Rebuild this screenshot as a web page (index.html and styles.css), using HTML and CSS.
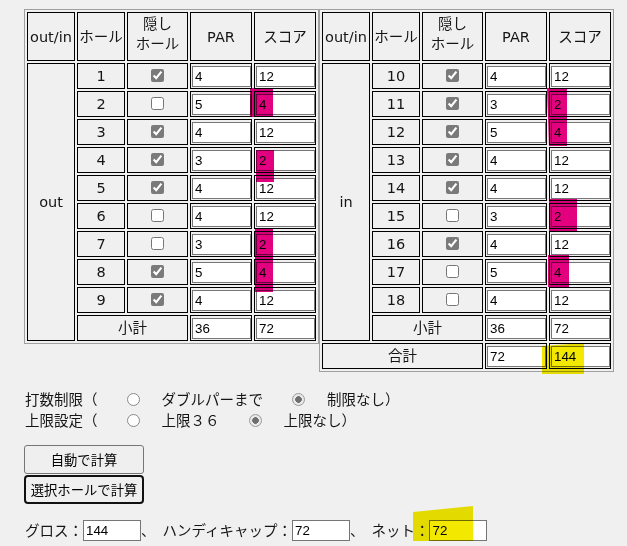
FILE: index.html
```html
<!DOCTYPE html>
<html lang="ja">
<head>
<meta charset="utf-8">
<title>スコア計算</title>
<link rel="stylesheet" href="styles.css">
</head>
<body>
<div class="page">
  <div class="cards">
    <table class="card">
      <thead>
        <tr class="head">
          <th class="w-side">out/in</th>
          <th class="w-hole">ホール</th>
          <th class="w-hide two-line">隠し<br>ホール</th>
          <th class="w-par">PAR</th>
          <th class="w-score">スコア</th>
        </tr>
      </thead>
      <tbody>
        <tr class="row"><td class="side" rowspan="10">out</td><td>1</td><td><input type="checkbox" checked></td><td class="field"><input class="num" value="4"></td><td class="field"><input class="num" value="12"></td></tr>
        <tr class="row"><td>2</td><td><input type="checkbox"></td><td class="field"><input class="num" value="5"></td><td class="field"><input class="num" value="4"></td></tr>
        <tr class="row"><td>3</td><td><input type="checkbox" checked></td><td class="field"><input class="num" value="4"></td><td class="field"><input class="num" value="12"></td></tr>
        <tr class="row"><td>4</td><td><input type="checkbox" checked></td><td class="field"><input class="num" value="3"></td><td class="field"><input class="num" value="2"></td></tr>
        <tr class="row"><td>5</td><td><input type="checkbox" checked></td><td class="field"><input class="num" value="4"></td><td class="field"><input class="num" value="12"></td></tr>
        <tr class="row"><td>6</td><td><input type="checkbox"></td><td class="field"><input class="num" value="4"></td><td class="field"><input class="num" value="12"></td></tr>
        <tr class="row"><td>7</td><td><input type="checkbox"></td><td class="field"><input class="num" value="3"></td><td class="field"><input class="num" value="2"></td></tr>
        <tr class="row"><td>8</td><td><input type="checkbox" checked></td><td class="field"><input class="num" value="5"></td><td class="field"><input class="num" value="4"></td></tr>
        <tr class="row"><td>9</td><td><input type="checkbox" checked></td><td class="field"><input class="num" value="4"></td><td class="field"><input class="num" value="12"></td></tr>
        <tr class="row"><td colspan="2">小計</td><td class="field"><input class="num" value="36"></td><td class="field"><input class="num" value="72"></td></tr>
      </tbody>
    </table>

    <table class="card">
      <thead>
        <tr class="head">
          <th class="w-side">out/in</th>
          <th class="w-hole">ホール</th>
          <th class="w-hide two-line">隠し<br>ホール</th>
          <th class="w-par">PAR</th>
          <th class="w-score">スコア</th>
        </tr>
      </thead>
      <tbody>
        <tr class="row"><td class="side" rowspan="10">in</td><td>10</td><td><input type="checkbox" checked></td><td class="field"><input class="num" value="4"></td><td class="field"><input class="num" value="12"></td></tr>
        <tr class="row"><td>11</td><td><input type="checkbox" checked></td><td class="field"><input class="num" value="3"></td><td class="field"><input class="num" value="2"></td></tr>
        <tr class="row"><td>12</td><td><input type="checkbox" checked></td><td class="field"><input class="num" value="5"></td><td class="field"><input class="num" value="4"></td></tr>
        <tr class="row"><td>13</td><td><input type="checkbox" checked></td><td class="field"><input class="num" value="4"></td><td class="field"><input class="num" value="12"></td></tr>
        <tr class="row"><td>14</td><td><input type="checkbox" checked></td><td class="field"><input class="num" value="4"></td><td class="field"><input class="num" value="12"></td></tr>
        <tr class="row"><td>15</td><td><input type="checkbox"></td><td class="field"><input class="num" value="3"></td><td class="field"><input class="num" value="2"></td></tr>
        <tr class="row"><td>16</td><td><input type="checkbox" checked></td><td class="field"><input class="num" value="4"></td><td class="field"><input class="num" value="12"></td></tr>
        <tr class="row"><td>17</td><td><input type="checkbox"></td><td class="field"><input class="num" value="5"></td><td class="field"><input class="num" value="4"></td></tr>
        <tr class="row"><td>18</td><td><input type="checkbox"></td><td class="field"><input class="num" value="4"></td><td class="field"><input class="num" value="12"></td></tr>
        <tr class="row"><td colspan="2">小計</td><td class="field"><input class="num" value="36"></td><td class="field"><input class="num" value="72"></td></tr>
        <tr class="row"><td colspan="3">合計</td><td class="field"><input class="num" value="72"></td><td class="field"><input class="num" value="144"></td></tr>
      </tbody>
    </table>
  </div>

  <div class="options">
    <div class="opt-line">
      <span class="opt-title">打数制限（</span>
      <input type="radio" class="radio" name="stroke">
      <span class="opt-label">ダブルパーまで</span>
      <input type="radio" class="radio" name="stroke" checked>
      <span class="opt-label">制限なし）</span>
    </div>
    <div class="opt-line">
      <span class="opt-title">上限設定（</span>
      <input type="radio" class="radio" name="cap">
      <span class="opt-label">上限３６</span>
      <input type="radio" class="radio" name="cap" checked>
      <span class="opt-label">上限なし）</span>
    </div>
  </div>

  <div class="btns">
    <button class="btn" type="button">自動で計算</button>
    <button class="btn is-focused" type="button">選択ホールで計算</button>
  </div>

  <div class="totals">
    <span class="t-label">グロス：</span><input class="num" value="144"><span class="t-sep">、</span>
    <span class="t-label">ハンディキャップ：</span><input class="num" value="72"><span class="t-sep">、</span>
    <span class="t-label">ネット：</span><input class="num" value="72">
  </div>

  <div class="marks">
    <span class="mark pink m1"></span>
    <span class="mark pink m2"></span>
    <span class="mark pink m3"></span>
    <span class="mark pink m4"></span>
    <span class="mark pink m5"></span>
    <span class="mark pink m6"></span>
    <span class="mark yellow m7"></span>
    <span class="mark yellow m8"></span>
  </div>
</div>
</body>
</html>
```

FILE: styles.css
```css
* {
  box-sizing: border-box;
}

html,
body {
  margin: 0;
  background: #f0f0f0;
}

body {
  font-family: "DejaVu Sans", "Noto Sans CJK JP", sans-serif;
  font-size: 14.5px;
  line-height: 20px;
  color: #151515;
}

.page {
  position: relative;
  width: 627px;
  height: 546px;
  padding: 9px 0 0 24px;
  overflow: hidden;
}

/* score cards */
.cards {
  display: flex;
  align-items: flex-start;
}

.card {
  table-layout: fixed;
  width: 295px;
  border: 1px solid #a0a0a0;
  border-collapse: separate;
  border-spacing: 2px;
}

.card th,
.card td {
  border: 1px solid #000;
  padding: 1px;
  text-align: center;
  vertical-align: middle;
  font-weight: normal;
  white-space: nowrap;
}

.w-side,
.w-hole {
  width: 48px;
}

.w-hide {
  width: 61px;
}

.w-par,
.w-score {
  width: 62px;
}

.head {
  height: 48px;
}

.card th.two-line {
  padding-bottom: 6px;
}

.row {
  height: 26px;
}

.card td.field {
  padding: 0 0 0 1px;
  text-align: left;
}

.num {
  display: inline-block;
  width: 59px;
  height: 21px;
  margin: 0;
  padding: 0 2px;
  border: 1px solid #767676;
  background: #fff;
  color: #000;
  font: 13.333px "Liberation Sans", Arial, sans-serif;
  vertical-align: middle;
}

input[type="checkbox"] {
  width: 13px;
  height: 13px;
  margin: 0 0 3px;
  accent-color: #7a7a7a;
  vertical-align: middle;
}

/* option lines */
.options {
  margin-top: 17px;
}

.opt-line {
  display: flex;
  align-items: center;
  height: 21px;
  white-space: nowrap;
}

.opt-title {
  padding-left: 1px;
}

.radio {
  appearance: none;
  width: 13px;
  height: 13px;
  margin: 0 22px 0 29px;
  border: 1px solid #8a8a8a;
  border-radius: 50%;
  background: #fff;
}

.radio:checked {
  border-color: #9a9a9a;
  background: radial-gradient(circle, #6e6e6e 0 3px, #e9e9e9 3.6px);
}

/* buttons */
.btns {
  display: flex;
  flex-direction: column;
  align-items: flex-start;
  gap: 1px;
  margin-top: 14px;
}

.btn {
  width: 120px;
  height: 29px;
  padding: 0;
  border: 1px solid #767676;
  border-radius: 3px;
  background: #efefef;
  color: #000;
  font: 13.333px "Noto Sans CJK JP", sans-serif;
}

.btn.is-focused {
  border: 2px solid #111;
  border-radius: 4px;
}

/* totals line */
.totals {
  display: flex;
  align-items: center;
  height: 21px;
  margin-top: 16px;
  white-space: nowrap;
}

.t-label:first-child {
  padding-left: 1px;
}

.totals .num {
  width: 58px;
}

.t-sep {
  margin-right: 7px;
}

/* marker strokes laid over the sheet */
.marks {
  position: absolute;
  inset: 0;
  pointer-events: none;
}

.mark {
  position: absolute;
  mix-blend-mode: multiply;
}

.pink {
  background: #e2007e;
}

.yellow {
  background: #f2e800;
}

.m1 { left: 250px; top: 88px;  width: 23px; height: 29px; }
.m2 { left: 256px; top: 150px; width: 18px; height: 32px; }
.m3 { left: 255px; top: 228px; width: 18px; height: 64px; }
.m4 { left: 547px; top: 88px;  width: 20px; height: 58px; clip-path: polygon(0 0, 100% 0, 100% 100%, 10% 100%); }
.m5 { left: 549px; top: 199px; width: 28px; height: 32px; }
.m6 { left: 548px; top: 255px; width: 21px; height: 32px; }
.m7 { left: 542px; top: 343px; width: 42px; height: 31px; clip-path: polygon(0 3px, 100% 0, 100% 100%, 0 100%); }
.m8 { left: 413px; top: 506px; width: 60px; height: 35px; clip-path: polygon(0 6px, 100% 0, 100% 100%, 0 100%); }
```
